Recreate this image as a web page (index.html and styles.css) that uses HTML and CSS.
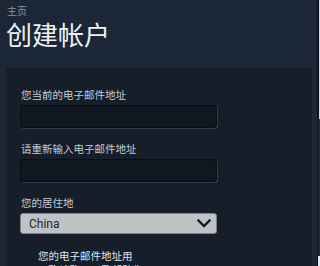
FILE: index.html
```html
<!DOCTYPE html>
<html lang="zh-CN">
<head>
<meta charset="utf-8">
<link rel="stylesheet" href="styles.css">
</head>
<body>
<div class="page">
  <div class="crumb">主页</div>
  <h1 class="title">创建帐户</h1>
  <div class="panel">
    <div class="field">
      <label class="label">您当前的电子邮件地址</label>
      <div class="input"></div>
    </div>
    <div class="field">
      <label class="label">请重新输入电子邮件地址</label>
      <div class="input"></div>
    </div>
    <div class="field">
      <label class="label">您的居住地</label>
      <div class="select">
        <span class="select-text">China</span>
        <svg class="chev" width="14" height="9" viewBox="0 0 14 9"><path d="M1.5 1.5 L7 7 L12.5 1.5" fill="none" stroke="#161b22" stroke-width="2.4" stroke-linecap="square"/></svg>
      </div>
    </div>
    <p class="note">您的电子邮件地址用<br>于确认购买以及帮助您</p>
  </div>
</div>
<div class="edge">
  <div class="edge-top"></div>
  <div class="edge-mid"></div>
  <div class="edge-bot"></div>
</div>
</body>
</html>
```
FILE: styles.css
```css
html, body {
  margin: 0;
  padding: 0;
  height: 100%;
  overflow: hidden;
}
body {
  background: #1b2636;
  font-family: "Noto Sans CJK SC", "Noto Sans", sans-serif;
  position: relative;
}
.page {
  padding: 4px 0 0 0;
  height: 266px;
  box-sizing: border-box;
  overflow: hidden;
}
.crumb {
  margin-left: 7px;
  font-size: 10px;
  line-height: 13px;
  color: #8a929c;
}
.title {
  margin: 3px 0 0 6px;
  font-size: 26px;
  line-height: 28px;
  font-weight: normal;
  color: #eef1f4;
}
.panel {
  margin: 20px 0 0 6px;
  width: 306px;
  height: 198px;
  overflow: hidden;
  background: #161e2a;
  padding: 20px 0 0 14px;
  box-sizing: border-box;
}
.field {
  margin-bottom: 14px;
}
.label {
  display: block;
  font-size: 10.5px;
  line-height: 14px;
  color: #c4ccd4;
  margin: 0 0 3px 1px;
}
.input {
  width: 197px;
  height: 23px;
  box-sizing: border-box;
  background: #111720;
  border: 1px solid #0a0d12;
  border-radius: 3px;
  box-shadow: 1px 1px 0 #323c4b;
}
.select {
  width: 197px;
  height: 21px;
  box-sizing: border-box;
  background: #c0c3c6;
  border: 1px solid #7f848a;
  border-radius: 3px;
  display: flex;
  align-items: center;
  justify-content: space-between;
  padding: 0 5px 0 8px;
}
.select-text {
  font-family: Roboto, "Liberation Sans", sans-serif;
  font-size: 12px;
  color: #1f242a;
}
.chev {
  display: block;
}
.note {
  margin: 15px 0 0 18px;
  font-size: 10.5px;
  line-height: 14px;
  color: #dfe5ea;
}
.edge {
  position: absolute;
  left: 317px;
  top: 0;
  width: 3px;
  height: 266px;
  display: flex;
  flex-direction: column;
  background: #0e131a;
}
.edge-top {
  height: 119px;
  margin-left: 2px;
  background: #d8dce0;
}
.edge-mid {
  flex: 1;
  margin-left: 1px;
  background: #1c2535;
}
.edge-bot {
  height: 10px;
  margin-left: 1px;
  background: #e6e8ea;
}
```
